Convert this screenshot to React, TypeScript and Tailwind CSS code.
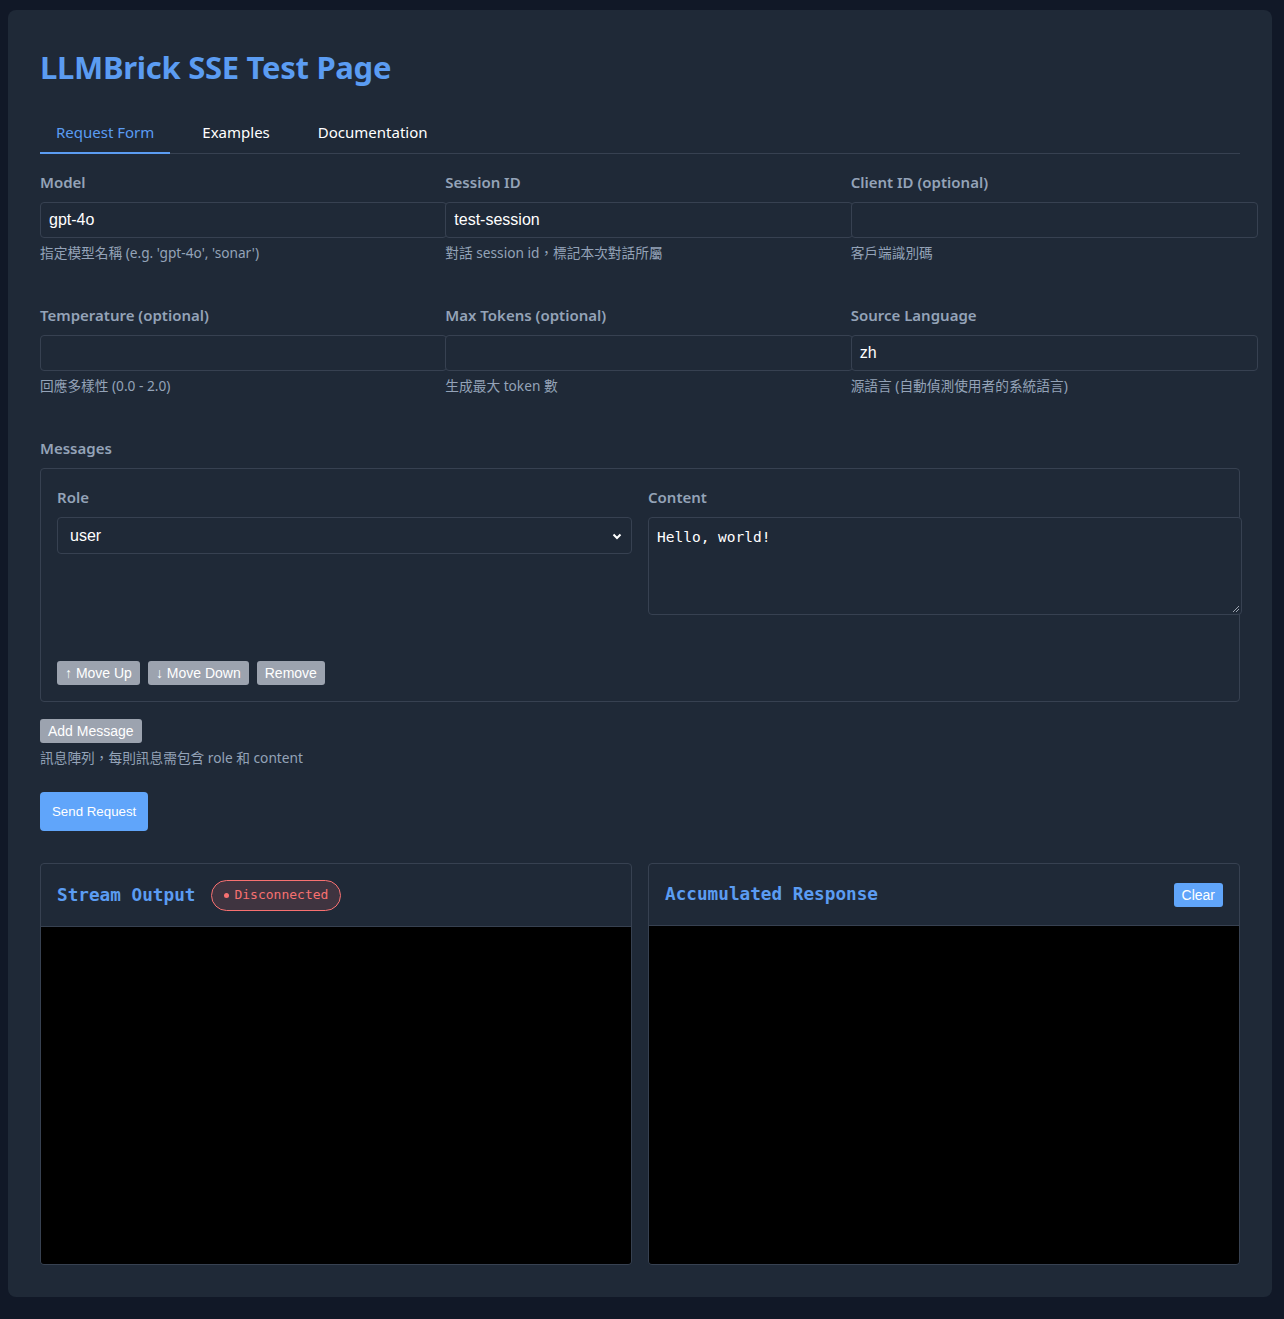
import React from 'react';

const SANS = "font-['Noto_Sans','Noto_Sans_CJK_TC',sans-serif]";
const ARIAL = "font-['Liberation_Sans','Noto_Sans_CJK_TC',sans-serif]";
const MONO = "font-['DejaVu_Sans_Mono',monospace]";

function Field(props: { label: string; value?: string; hint: string }) {
  return (
    <div className="min-w-0">
      <div className={`${SANS} mb-2 text-[15px] leading-6 font-semibold text-[#94a3b8]`}>{props.label}</div>
      <div
        className={`${ARIAL} flex h-9 w-[calc(100%+18px)] items-center rounded border border-[#374151] bg-[#1f2937] px-2 text-base text-white`}
      >
        {props.value}
      </div>
      <div className={`${SANS} mt-[5px] text-[13.7px] leading-5 text-[#94a3b8]`}>{props.hint}</div>
    </div>
  );
}

function SmallButton(props: { children: React.ReactNode }) {
  return (
    <button
      type="button"
      className={`${ARIAL} h-6 rounded-[3px] bg-[#9ca3af] px-2 text-sm text-white`}
    >
      {props.children}
    </button>
  );
}

export default function App() {
  return (
    <div className="min-h-screen bg-[#111827] pt-[10px] pb-[22px] pl-2 pr-3">
      <div className="rounded-lg bg-[#1f2937] px-8 pt-8 pb-8">
        <h1 className={`${SANS} mt-[5px] mb-[25px] text-[31px] leading-10 font-bold tracking-[-0.3px] text-[#5b9cf2]`}>
          LLMBrick SSE Test Page
        </h1>

        <div className={`${SANS} flex gap-4 border-b border-[#374151] text-[15px]`}>
          <button type="button" className="-mb-px border-b-2 border-[#5b9cf2] px-4 py-2 leading-6 text-[#5b9cf2]">
            Request Form
          </button>
          <button type="button" className="-mb-px border-b-2 border-transparent px-4 py-2 leading-6 text-white">
            Examples
          </button>
          <button type="button" className="-mb-px border-b-2 border-transparent px-4 py-2 leading-6 text-white">
            Documentation
          </button>
        </div>

        <div className="mt-4 grid grid-cols-3 gap-x-4 gap-y-10">
          <Field label="Model" value="gpt-4o" hint="指定模型名稱 (e.g. 'gpt-4o', 'sonar')" />
          <Field label="Session ID" value="test-session" hint="對話 session id，標記本次對話所屬" />
          <Field label="Client ID (optional)" hint="客戶端識別碼" />
          <Field label="Temperature (optional)" hint="回應多樣性 (0.0 - 2.0)" />
          <Field label="Max Tokens (optional)" hint="生成最大 token 數" />
          <Field label="Source Language" value="zh" hint="源語言 (自動偵測使用者的系統語言)" />
        </div>

        <div className="mt-10">
          <div className={`${SANS} mb-2 text-[15px] leading-6 font-semibold text-[#94a3b8]`}>Messages</div>
          <div className="rounded border border-[#374151] p-4">
            <div className="grid grid-cols-2 gap-4">
              <div className="min-w-0">
                <div className={`${SANS} mb-2 text-[15px] leading-6 font-semibold text-[#94a3b8]`}>Role</div>
                <div
                  className={`${ARIAL} flex h-[37px] items-center justify-between rounded border border-[#374151] bg-[#1f2937] pr-2 pl-3 text-base text-white`}
                >
                  <span>user</span>
                  <svg className="h-3 w-3" viewBox="0 0 12 12" fill="none" stroke="white" strokeWidth={2}>
                    <path d="M2.5 4.5 6 8l3.5-3.5" />
                  </svg>
                </div>
              </div>
              <div className="min-w-0">
                <div className={`${SANS} mb-2 text-[15px] leading-6 font-semibold text-[#94a3b8]`}>Content</div>
                <div
                  className={`${MONO} relative h-[98px] w-[calc(100%+19px)] rounded border border-[#374151] bg-[#1f2937] px-2 py-[9px] text-[14.5px] leading-5 text-white`}
                >
                  Hello, world!
                  <svg className="absolute right-[1px] bottom-[1px] h-2 w-2" viewBox="0 0 8 8" stroke="#9ca3af" strokeWidth={1}>
                    <path d="M1 7 7 1M4 7l3-3" />
                  </svg>
                </div>
              </div>
            </div>
            <div className="mt-[46px] flex gap-2">
              <SmallButton>↑ Move Up</SmallButton>
              <SmallButton>↓ Move Down</SmallButton>
              <SmallButton>Remove</SmallButton>
            </div>
          </div>
          <div className="mt-4">
            <SmallButton>Add Message</SmallButton>
          </div>
          <div className={`${SANS} mt-[5px] text-[13.7px] leading-5 text-[#94a3b8]`}>
            訊息陣列，每則訊息需包含 role 和 content
          </div>
        </div>

        <button
          type="button"
          className={`${ARIAL} mt-6 h-[39px] rounded bg-[#60a5fa] px-3 text-[13.3px] text-white`}
        >
          Send Request
        </button>

        <div className="mt-8 grid grid-cols-2 gap-4">
          <div className="overflow-hidden rounded border border-[#374151]">
            <div className="flex h-[63px] items-center gap-4 border-b border-[#374151] px-4">
              <span className={`${MONO} text-[17.7px] font-bold text-[#5b9cf2]`}>Stream Output</span>
              <span
                className={`${MONO} flex h-[31px] items-center gap-[5px] rounded-full border border-[#f87171] bg-[#3f3440] px-3 text-[13px] text-[#f87171]`}
              >
                <span className="h-[5px] w-[5px] rounded-full bg-[#f87171]" />
                Disconnected
              </span>
            </div>
            <div className="h-[337px] bg-black" />
          </div>
          <div className="overflow-hidden rounded border border-[#374151]">
            <div className="flex h-[62px] items-center justify-between border-b border-[#374151] px-4">
              <span className={`${MONO} text-[17.7px] font-bold text-[#5b9cf2]`}>Accumulated Response</span>
              <button
                type="button"
                className={`${ARIAL} h-6 rounded-[3px] bg-[#60a5fa] px-2 text-sm text-white`}
              >
                Clear
              </button>
            </div>
            <div className="h-[338px] bg-black" />
          </div>
        </div>
      </div>
    </div>
  );
}
